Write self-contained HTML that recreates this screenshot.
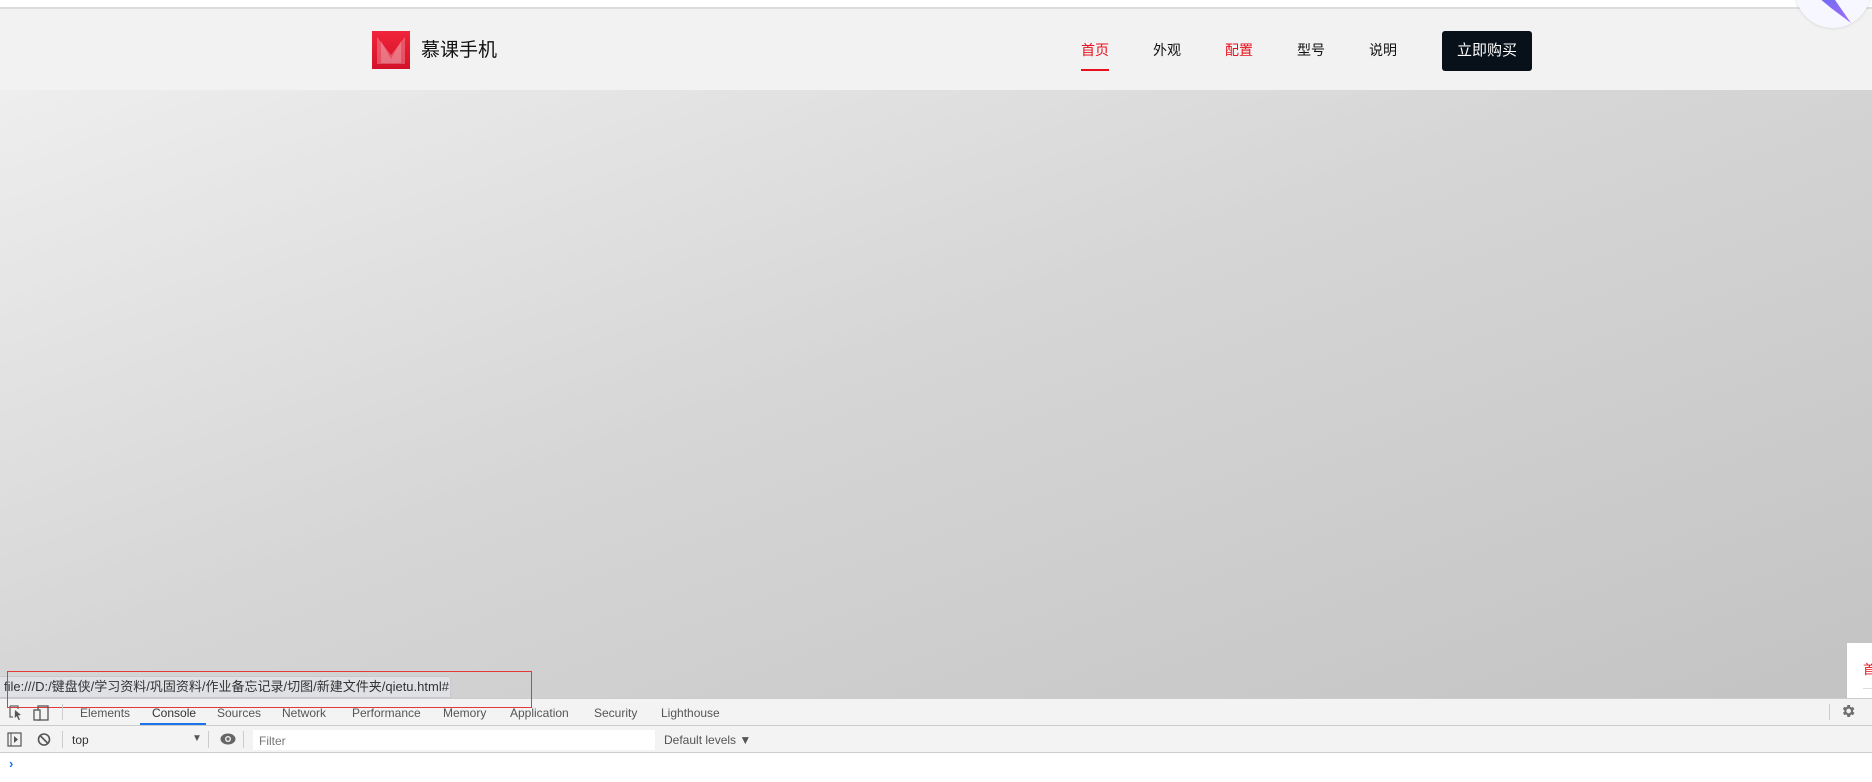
<!DOCTYPE html>
<html><head><meta charset="utf-8"><style>
*{margin:0;padding:0;box-sizing:border-box}
body{width:1872px;height:782px;overflow:hidden;position:relative;font-family:"Liberation Sans","Noto Sans CJK SC",sans-serif;background:#fff}
.abs{position:absolute}
.topbar{left:0;top:0;width:1872px;height:9px;background:#fff;border-bottom:2px solid #dcdcdc}
.header{left:0;top:9px;width:1872px;height:81px;background:#f2f2f2}
.main{left:0;top:90px;width:1872px;height:608px;background:linear-gradient(160deg,#eeeeee 0%,#d6d6d6 45%,#c3c3c3 100%)}
.nav{top:41px;font-size:14px;color:#111;line-height:18px}
.dt{font-size:12px;color:#333;line-height:14px}
</style></head><body>
<div class="abs topbar"></div>
<div class="abs header"></div>
<div class="abs" style="left:372px;top:31px;width:38px;height:38px;background:linear-gradient(180deg,#f0243a,#d3122a)">
<svg width="38" height="38"><polygon points="5,6 19,24 33,6 33,33 5,33" fill="rgba(255,255,255,0.25)"/><polygon points="9,10 19,28 29,10 29,32 9,32" fill="rgba(255,255,255,0.2)"/></svg></div>
<div class="abs" style="left:421px;top:39px;font-size:19px;color:#111;line-height:24px">慕课手机</div>
<div class="abs nav" style="left:1081px;color:#e8101c">首页</div>
<div class="abs" style="left:1081px;top:69px;width:28px;height:2px;background:#e8101c"></div>
<div class="abs nav" style="left:1153px">外观</div>
<div class="abs nav" style="left:1225px;color:#e8101c">配置</div>
<div class="abs nav" style="left:1297px">型号</div>
<div class="abs nav" style="left:1369px">说明</div>
<div class="abs" style="left:1442px;top:31px;width:90px;height:40px;background:#08111a;border-radius:3px;color:#fff;font-size:15px;line-height:40px;text-align:center">立即购买</div>
<div class="abs" style="left:1795px;top:-48px;width:76px;height:76px;border-radius:50%;background:#f7f8ff;box-shadow:0 0 3px rgba(0,0,0,.15)">
<svg width="76" height="76" style="position:absolute;left:0;top:0"><defs><linearGradient id="g" x1="0" y1="0" x2="1" y2="1"><stop offset="0" stop-color="#6a6cf5"/><stop offset="1" stop-color="#a86cf5"/></linearGradient></defs><polygon points="24,46 40,48 56,71 36,56" fill="url(#g)"/></svg></div>
<div class="abs main"></div>
<div class="abs" style="left:1847px;top:643px;width:30px;height:55px;background:#fff"><div style="position:absolute;left:16px;top:16px;font-size:13px;color:#e8101c">首</div><div style="position:absolute;left:16px;top:45px;width:14px;height:1px;background:#ddd"></div></div>
<div class="abs" style="left:0;top:676px;width:451px;height:22px;background:#dfe1e5;border:1px solid #c8cacf;border-left:none;border-radius:0 3px 0 0;font-size:13px;color:#333;line-height:20px;padding-left:4px">file:///D:/键盘侠/学习资料/巩固资料/作业备忘记录/切图/新建文件夹/qietu.html#</div>
<div class="abs" style="left:0;top:698px;width:1872px;height:28px;background:#f3f3f3;border-top:1px solid #ccc;border-bottom:1px solid #ccc"></div>
<div class="abs" style="left:7px;top:671px;width:525px;height:37px;border:1px solid #e23a3a"></div>
<svg class="abs" style="left:8px;top:704px" width="50" height="18"><path d="M2 2h8v3M2 2v11h3" stroke="#666" fill="none" stroke-width="1.3"/><path d="M7 6l6 5-3 .5 2 4-1.3.6-2-4-2 2z" fill="#555"/><rect x="30" y="2" width="10" height="14" fill="none" stroke="#555" stroke-width="1.3"/><rect x="26" y="6" width="6" height="10" fill="#f3f3f3" stroke="#555" stroke-width="1.3"/></svg>
<div class="abs" style="left:62px;top:704px;width:1px;height:16px;background:#ccc"></div>
<div class="abs dt" style="left:80px;top:706px;color:#555">Elements</div>
<div class="abs dt" style="left:152px;top:706px">Console</div>
<div class="abs" style="left:140px;top:723px;width:66px;height:2px;background:#1a73e8"></div>
<div class="abs dt" style="left:217px;top:706px;color:#555">Sources</div>
<div class="abs dt" style="left:282px;top:706px;color:#555">Network</div>
<div class="abs dt" style="left:352px;top:706px;color:#555">Performance</div>
<div class="abs dt" style="left:443px;top:706px;color:#555">Memory</div>
<div class="abs dt" style="left:510px;top:706px;color:#555">Application</div>
<div class="abs dt" style="left:594px;top:706px;color:#555">Security</div>
<div class="abs dt" style="left:661px;top:706px;color:#555">Lighthouse</div>
<div class="abs" style="left:1829px;top:704px;width:1px;height:16px;background:#ccc"></div>
<svg class="abs" style="left:1840px;top:703px" width="16" height="16" viewBox="0 0 24 24"><path fill="#6e6e6e" d="M19.4 13a7.5 7.5 0 000-2l2.1-1.6-2-3.5-2.5 1a7 7 0 00-1.7-1L15 3h-4l-.4 2.7a7 7 0 00-1.7 1l-2.5-1-2 3.5L6.6 11a7.5 7.5 0 000 2l-2.1 1.6 2 3.5 2.5-1a7 7 0 001.7 1L11 21h4l.4-2.7a7 7 0 001.7-1l2.5 1 2-3.5zM13 15.5a3.5 3.5 0 110-7 3.5 3.5 0 010 7z"/></svg>
<div class="abs" style="left:0;top:726px;width:1872px;height:27px;background:#f3f3f3;border-bottom:1px solid #ccc"></div>
<svg class="abs" style="left:7px;top:732px" width="50" height="16"><rect x="1" y="1" width="13" height="13" fill="none" stroke="#555" stroke-width="1.2"/><path d="M4 1v13" stroke="#555"/><path d="M7 4l4 3.5-4 3.5z" fill="#555"/><circle cx="37" cy="7.5" r="5.5" fill="none" stroke="#555" stroke-width="1.6"/><path d="M33 3.5l8 8" stroke="#555" stroke-width="1.6"/></svg>
<div class="abs" style="left:62px;top:731px;width:1px;height:17px;background:#ccc"></div>
<div class="abs dt" style="left:72px;top:733px">top</div>
<div class="abs" style="left:192px;top:733px;font-size:10px;color:#555">▼</div>
<div class="abs" style="left:208px;top:731px;width:1px;height:17px;background:#ccc"></div>
<svg class="abs" style="left:220px;top:733px" width="16" height="12"><ellipse cx="8" cy="6" rx="7.5" ry="5.5" fill="#666"/><circle cx="8" cy="6" r="3" fill="#f3f3f3"/><circle cx="8" cy="6" r="1.6" fill="#666"/></svg>
<div class="abs" style="left:243px;top:731px;width:1px;height:17px;background:#ccc"></div>
<div class="abs" style="left:253px;top:730px;width:402px;height:20px;background:#fff"></div>
<div class="abs dt" style="left:259px;top:734px;color:#777">Filter</div>
<div class="abs dt" style="left:664px;top:733px;color:#555">Default levels ▼</div>
<div class="abs" style="left:9px;top:756px;font-size:13px;color:#1a73e8;font-weight:bold">›</div>
</body></html>
